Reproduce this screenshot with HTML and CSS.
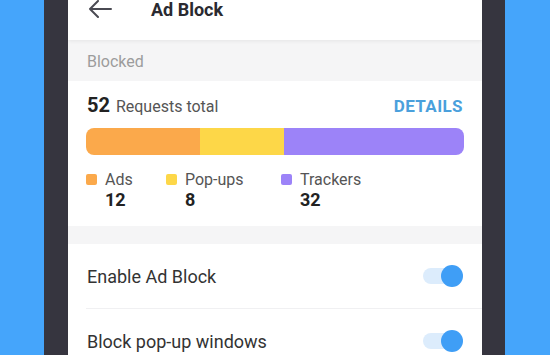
FILE: index.html
```html
<!DOCTYPE html>
<html lang="en">
<head>
  <meta charset="UTF-8">
  <title>Ad Block</title>
  <link rel="stylesheet" href="styles.css">
</head>
<body>

  <div class="phone">
    <div class="screen">

      <header class="topbar">
        <svg class="back" width="24" height="18" viewBox="0 0 24 18">
          <path d="M23 9H2M10 1L2 9l8 8" fill="none" stroke="#4a4a52" stroke-width="2" stroke-linecap="round" stroke-linejoin="round"/>
        </svg>
        <h1 class="title">Ad Block</h1>
      </header>

      <div class="section-label">Blocked</div>

      <div class="card">
        <div class="total-row">
          <div><span class="total">52</span> <span class="total-text">Requests total</span></div>
          <a href="#" class="details">DETAILS</a>
        </div>

        <div class="bar">
          <div class="seg ads"></div>
          <div class="seg popups"></div>
          <div class="seg trackers"></div>
        </div>

        <div class="legend">
          <div class="item item-ads">
            <div class="label"><span class="dot ads"></span>Ads</div>
            <div class="count">12</div>
          </div>
          <div class="item item-popups">
            <div class="label"><span class="dot popups"></span>Pop-ups</div>
            <div class="count">8</div>
          </div>
          <div class="item">
            <div class="label"><span class="dot trackers"></span>Trackers</div>
            <div class="count">32</div>
          </div>
        </div>
      </div>

      <div class="gap"></div>

      <div class="settings">
        <div class="row">
          <span>Enable Ad Block</span>
          <span class="toggle on"></span>
        </div>
        <div class="row">
          <span>Block pop-up windows</span>
          <span class="toggle on"></span>
        </div>
      </div>

    </div>
  </div>

</body>
</html>
```

FILE: styles.css
```css
body {
  margin: 0;
  background: #45a5fb;
  font-family: Roboto, "Noto Sans", sans-serif;
  color: #333;
  height: 355px;
  overflow: hidden;
}

.phone {
  width: 414px;
  margin-left: 44px;
  padding: 0 23px 0 24px;
  height: 355px;
  background: #36353f;
}

.screen {
  background: #fff;
  height: 355px;
  overflow: hidden;
}

.topbar {
  position: relative;
  z-index: 1;
  height: 40px;
  display: flex;
  align-items: flex-start;
  background: #fff;
  box-shadow: 0 1px 4px rgba(0, 0, 0, 0.07);
}

.back {
  margin: 0 0 0 20px;
}

.title {
  margin: 0 0 0 39px;
  padding-top: 1px;
  font-size: 18px;
  line-height: 18px;
  font-weight: 700;
  color: #2a2a30;
}

.section-label {
  height: 41px;
  line-height: 43px;
  padding-left: 19px;
  background: #f5f5f6;
  color: #9c9c9c;
  font-size: 16px;
}

.card {
  padding: 12px 18px 0;
  height: 133px;
}

.total-row {
  display: flex;
  justify-content: space-between;
  align-items: baseline;
  height: 30px;
}

.total {
  font-size: 20px;
  font-weight: 700;
  color: #222;
  margin-left: 1px;
}

.total-text {
  font-size: 16px;
  color: #555;
  margin-left: 2px;
}

.details {
  font-size: 17px;
  font-weight: 700;
  letter-spacing: 0.4px;
  color: #4aa0dc;
  text-decoration: none;
  margin-right: 1px;
}

.bar {
  display: flex;
  height: 27px;
  margin-top: 5px;
  border-radius: 8px;
  overflow: hidden;
}

.seg.ads { width: 114px; background: #fba94b; }
.seg.popups { width: 84px; background: #fdd748; }
.seg.trackers { flex: 1; background: #9c83f8; }

.legend {
  display: flex;
  margin-top: 14px;
  font-size: 16px;
}

.item {
  width: 115px;
}

.item-ads {
  width: 80px;
}

.label {
  display: flex;
  align-items: center;
  color: #555;
  height: 20px;
}

.dot {
  width: 11px;
  height: 11px;
  border-radius: 2px;
  margin-right: 8px;
}

.dot.ads { background: #fba94b; }
.dot.popups { background: #fdd748; }
.dot.trackers { background: #9c83f8; }

.count {
  padding-left: 19px;
  font-size: 18px;
  font-weight: 700;
  color: #222;
  line-height: 22px;
}

.gap {
  height: 18px;
  background: #f5f5f6;
}

.row {
  display: flex;
  justify-content: space-between;
  align-items: center;
  height: 64px;
  margin-left: 18px;
  padding-right: 19px;
  font-size: 18px;
  color: #333;
  border-bottom: 1px solid #f0f0f2;
}

.row span:first-child {
  margin-left: 1px;
}

.toggle {
  position: relative;
  width: 40px;
  height: 22px;
}

.toggle::before {
  content: "";
  position: absolute;
  left: 0;
  top: 3px;
  width: 38px;
  height: 16px;
  border-radius: 8px;
  background: #dcecfc;
}

.toggle::after {
  content: "";
  position: absolute;
  right: 0;
  top: 0;
  width: 22px;
  height: 22px;
  border-radius: 50%;
  background: #3f9ef6;
}
```
